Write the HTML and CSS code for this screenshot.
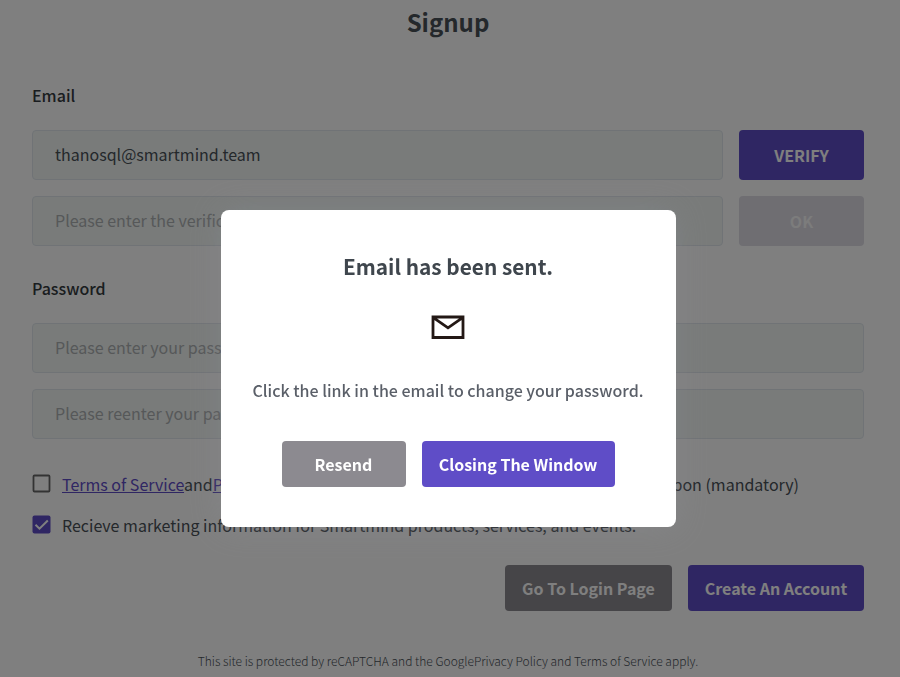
FILE: index.html
```html
<!DOCTYPE html>
<html lang="en">
<head>
<meta charset="utf-8">
<title>Signup</title>
<link rel="stylesheet" href="styles.css">
</head>
<body>
<main class="page">
  <h1 class="title">Signup</h1>
  <form class="form">
    <h2 class="label">Email</h2>
    <div class="row"><div class="field filled">thanosql@smartmind.team</div><button type="button" class="btn side primary">VERIFY</button></div>
    <div class="row"><div class="field">Please enter the verification code</div><button type="button" class="btn side disabled">OK</button></div>
    <h2 class="label second">Password</h2>
    <div class="row"><div class="field">Please enter your password</div></div>
    <div class="row"><div class="field">Please reenter your password</div></div>
    <div class="check terms">
      <svg class="box" viewBox="-.5 -.5 18 18"><rect x="1" y="1" width="16" height="16" rx="1" fill="none" stroke="#666" stroke-width="1.8"/></svg>
      <span><a>Terms of Service</a>and<a>Privacy Policy</a></span><span class="end">have been agreed upon (mandatory)</span>
    </div>
    <div class="check">
      <svg class="box" viewBox="-.5 -.5 18 18"><rect width="18" height="18" rx="2" fill="#5f4dc7"/><path d="M3 9.2 7 13.2 15.3 5" fill="none" stroke="#fff" stroke-width="2"/></svg>
      <span>Recieve marketing information for Smartmind products, services, and events.</span>
    </div>
    <div class="actions"><button type="button" class="btn grey login">Go To Login Page</button><button type="button" class="btn primary create">Create An Account</button></div>
  </form>
  <p class="note">This site is protected by reCAPTCHA and the GooglePrivacy Policy and Terms of Service apply.</p>
</main>
<div class="overlay">
  <section class="modal">
    <h2 class="modal-title">Email has been sent.</h2>
    <svg class="mail" viewBox="0.5 -.5 33 24"><path d="M1.5 1.5H31.5V22H1.5ZM1.5 1.8 16.5 12.3 31.5 1.8" fill="none" stroke="#231815" stroke-width="2.8"/></svg>
    <p class="message">Click the link in the email to change your password.</p>
    <div class="modal-actions"><button type="button" class="btn grey resend">Resend</button><button type="button" class="btn primary close">Closing The Window</button></div>
  </section>
</div>
</body>
</html>
```
FILE: styles.css
```css
* { box-sizing: border-box; }
body { margin: 0; height: 677px; overflow: hidden; background: #fff; color: #495057; font: 16px/24px "Noto Sans CJK KR", sans-serif; }
h1, h2, p { margin: 0; }
.page { padding: 3px 36px 0 32px; }
.title { text-align: center; font-size: 24px; line-height: 38px; font-weight: 700; color: #495057; }
.form { padding-top: 42px; }
.label { font-size: 16px; line-height: 24px; font-weight: 500; color: #343a40; margin-bottom: 23px; }
.label.second { margin-top: 30px; }
.row { display: flex; gap: 16px; margin-bottom: 16px; }
.field { flex: 1; height: 50px; padding: 0 22px; line-height: 46px; border: 1px solid #e1e6ec; border-radius: 4px; background: #f2f7f5; color: #adb0b2; white-space: nowrap; }
.filled { color: #495057; }
.btn { border: 0; border-radius: 4px; padding: 0 0 1px; color: #fff; font: 700 16px/24px "Noto Sans CJK KR", sans-serif; height: 46px; white-space: nowrap; }
.side { width: 125px; height: 50px; }
.primary { background: #5f4dc7; }
.grey { background: #8c8a90; }
.disabled { background: #dedce5; color: #f8f8f8; }
.check { display: flex; align-items: flex-start; gap: 12px; height: 24px; margin-bottom: 17px; white-space: nowrap; }
.check.terms { margin-top: 33px; }
.terms .end { margin-left: auto; padding-right: 65px; }
.box { width: 18px; height: 18px; flex: none; margin-top: 2px; overflow: visible; }
.check a { color: #5f4dc7; text-decoration: underline; }
.actions { display: flex; justify-content: flex-end; gap: 16px; padding-top: 11px; }
.login { width: 167px; }
.create { width: 176px; }
.note { text-align: center; font-size: 12px; line-height: 18px; font-weight: 300; margin-top: 41px; }
.overlay { position: fixed; inset: 0; display: flex; align-items: flex-start; justify-content: center; padding: 210px 4px 0 0; background: rgba(0,0,0,.5); }
.modal { width: 455px; height: 317px; display: flex; flex-direction: column; align-items: center; padding-top: 39px; border-radius: 8px; background: #fff; box-shadow: 0 0 32px rgba(145,150,155,.3); }
.modal-title { font-size: 20.8px; line-height: 34px; font-weight: 700; color: #3f464d; }
.mail { width: 33px; height: 24px; margin-top: 32px; overflow: visible; }
.message { font-weight: 500; line-height: 24px; margin-top: 39px; color: #5a5f68; white-space: nowrap; }
.modal-actions { display: flex; gap: 16px; margin-top: 39px; }
.resend { width: 124px; }
.close { width: 193px; }
```
